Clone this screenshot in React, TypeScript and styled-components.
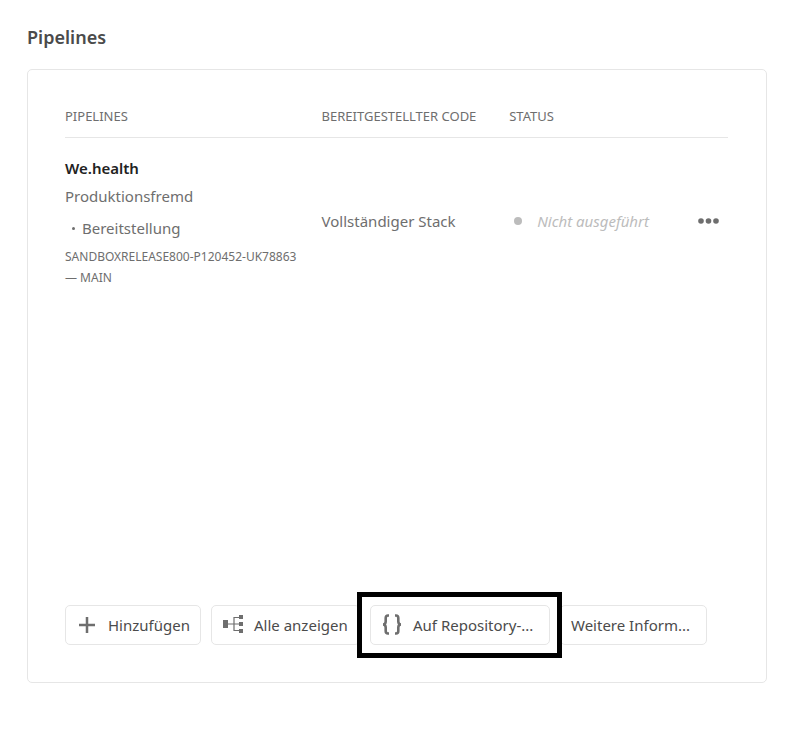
import React from "react";
import styled, { createGlobalStyle } from "styled-components";

const GlobalStyle = createGlobalStyle`
  *, *::before, *::after { box-sizing: border-box; }
  body {
    margin: 0;
    background: #fff;
    color: #6e6e6e;
    font-family: "Noto Sans", sans-serif;
    font-size: 15px;
  }
`;

const Page = styled.main`
  display: flex;
  flex-direction: column;
  min-height: 100vh;
  padding: 24px 22px 50px 27px;
`;

const Title = styled.h1`
  margin: 0 0 18px;
  font-size: 18px;
  line-height: 27px;
  font-weight: 600;
  color: #4b4b4b;
`;

const Card = styled.section`
  flex: 1;
  display: flex;
  flex-direction: column;
  justify-content: space-between;
  gap: 24px;
  padding: 36px 38px 37px 37px;
  border: 1px solid #e6e6e6;
  border-radius: 5px;
`;

const Table = styled.table`
  width: 100%;
  table-layout: fixed;
  border-collapse: collapse;
  text-align: left;
`;

const HeadCell = styled.th<{ $width: string }>`
  width: ${(p) => p.$width};
  padding: 0 0 11px;
  border-bottom: 1px solid #e6e6e6;
  font-size: 13px;
  line-height: 20px;
  font-weight: 400;
  text-transform: uppercase;
  white-space: nowrap;
`;

const Cell = styled.td`
  padding: 16px 0 0;
  vertical-align: middle;
`;

const PipelineName = styled.div`
  font-weight: 600;
  line-height: 28px;
  color: #222;
`;

const PipelineKind = styled.div`
  line-height: 28px;
`;

const Step = styled.div`
  display: flex;
  align-items: center;
  gap: 7px;
  padding-left: 7px;
  line-height: 36px;

  &::before {
    content: "";
    width: 3px;
    height: 3px;
    border-radius: 50%;
    background: #6e6e6e;
  }
`;

const Branch = styled.div`
  padding-right: 20px;
  font-size: 12px;
  line-height: 21px;
`;

const Status = styled.div`
  display: flex;
  align-items: center;
  gap: 15px;
  padding-left: 5px;
  color: #bcbcbc;
  font-style: italic;
  white-space: nowrap;

  &::before {
    content: "";
    width: 8px;
    height: 8px;
    border-radius: 50%;
    background: #bcbcbc;
  }
`;

const MoreCell = styled(Cell)`
  text-align: right;
`;

const MoreButton = styled.button`
  display: inline-flex;
  padding: 8px;
  border: 0;
  background: none;
  color: #6e6e6e;
  cursor: pointer;
`;

const Toolbar = styled.div`
  display: flex;
  gap: 10px;
`;

const ActionButton = styled.button<{ $width: number }>`
  flex: 0 1 auto;
  width: ${(p) => p.$width}px;
  display: flex;
  align-items: center;
  gap: 10px;
  height: 40px;
  padding: 0 10px;
  border: 1px solid #e6e6e6;
  border-radius: 5px;
  background: #fff;
  color: #4b4b4b;
  font: inherit;
  white-space: nowrap;
  cursor: pointer;

  svg { flex: none; color: #6e6e6e; }
`;

const Highlight = styled.div`
  position: relative;
  display: flex;

  &::after {
    content: "";
    position: absolute;
    inset: -13px -12px -13px -13px;
    border: 5px solid #000;
    pointer-events: none;
  }
`;

const AddIcon = () => (
  <svg width="22" height="22" viewBox="0 0 22 22" aria-hidden="true">
    <path d="M11 3v16M3 11h16" stroke="currentColor" strokeWidth="2.5" fill="none" />
  </svg>
);

const TreeIcon = () => (
  <svg width="22" height="22" viewBox="0 0 22 22" aria-hidden="true">
    <path fill="currentColor" d="M1 6h5v8H1zM17 1h4v4h-4zM17 8h4v4h-4zM17 15h4v4h-4z" />
    <path d="M6 10h11M17 3.500h-5v13h5" stroke="currentColor" strokeWidth="1.200" fill="none" />
  </svg>
);

const BracesIcon = () => (
  <svg width="22" height="22" viewBox="0 0 22 22" aria-hidden="true">
    <path
      d="M8 1.500H7Q4.700 1.500 4.700 4V7.500Q4.700 10.500 2 10.500Q4.700 10.500 4.700 13.500V17Q4.700 19.500 7 19.500H8M14 1.500h1Q17.300 1.500 17.300 4V7.500Q17.300 10.500 20 10.500Q17.300 10.500 17.300 13.500V17Q17.300 19.500 15 19.500H14"
      stroke="currentColor"
      strokeWidth="2.600"
      fill="none"
    />
  </svg>
);

const MoreIcon = () => (
  <svg width="22" height="8" viewBox="0 0 22 8" fill="currentColor" aria-hidden="true">
    <circle cx="3" cy="4" r="2.800" />
    <circle cx="10.500" cy="4" r="2.800" />
    <circle cx="18" cy="4" r="2.800" />
  </svg>
);

export default function App() {
  return (
    <Page>
      <GlobalStyle />
      <Title>Pipelines</Title>
      <Card>
        <Table>
          <thead>
            <tr>
              <HeadCell scope="col" $width="38.7%">Pipelines</HeadCell>
              <HeadCell scope="col" $width="28.3%">Bereitgestellter Code</HeadCell>
              <HeadCell scope="col" $width="24%">Status</HeadCell>
              <HeadCell $width="9%" />
            </tr>
          </thead>
          <tbody>
            <tr>
              <Cell>
                <PipelineName>We.health</PipelineName>
                <PipelineKind>Produktionsfremd</PipelineKind>
                <Step>Bereitstellung</Step>
                <Branch>SANDBOXRELEASE800-P120452-UK78863 — MAIN</Branch>
              </Cell>
              <Cell>Vollständiger Stack</Cell>
              <Cell>
                <Status>Nicht ausgeführt</Status>
              </Cell>
              <MoreCell>
                <MoreButton type="button" aria-label="Weitere Aktionen">
                  <MoreIcon />
                </MoreButton>
              </MoreCell>
            </tr>
          </tbody>
        </Table>
        <Toolbar>
          <ActionButton type="button" $width={136}>
            <AddIcon />
            Hinzufügen
          </ActionButton>
          <ActionButton type="button" $width={149}>
            <TreeIcon />
            Alle anzeigen
          </ActionButton>
          <Highlight>
            <ActionButton type="button" $width={180}>
              <BracesIcon />
              Auf Repository-...
            </ActionButton>
          </Highlight>
          <ActionButton type="button" $width={147}>Weitere Inform...</ActionButton>
        </Toolbar>
      </Card>
    </Page>
  );
}
